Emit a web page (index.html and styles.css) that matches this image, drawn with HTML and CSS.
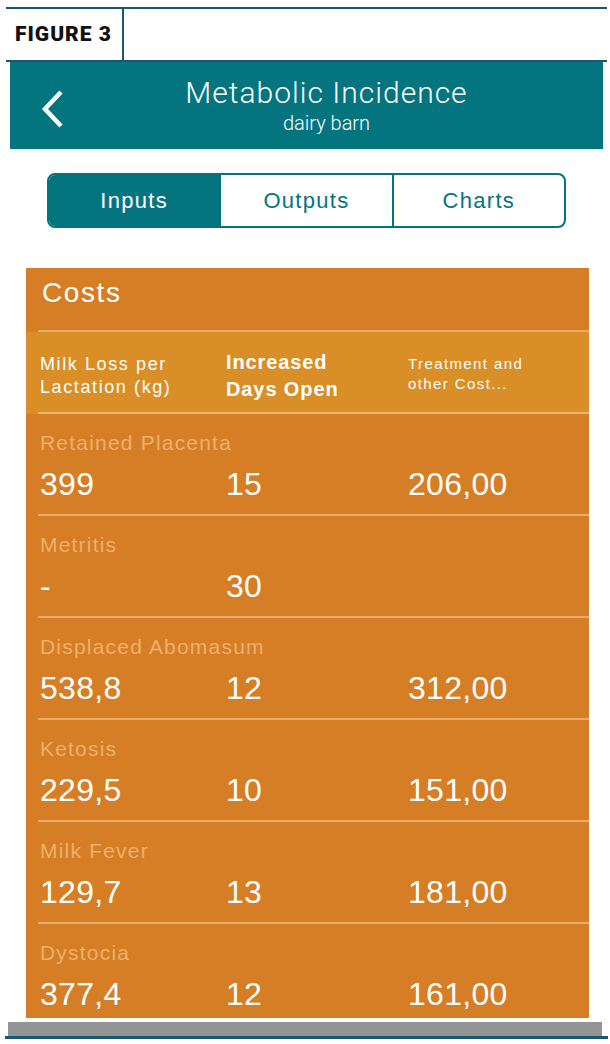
FILE: index.html
```html
<!DOCTYPE html>
<html>
<head>
<meta charset="utf-8">
<title>Metabolic Incidence</title>
<link rel="stylesheet" href="styles.css">
</head>
<body>
<div class="figure-head">
    <div class="figure-label">FIGURE 3</div>
    <div class="figure-rest"></div>
</div>

<div class="screen">
    <div class="nav-bar">
        <a class="back-btn" href="#">
            <svg width="24" height="40" viewBox="0 0 24 40">
                <polyline points="20,3 4,20 20,37" fill="none" stroke="#ffffff" stroke-width="4.5"/>
            </svg>
        </a>
        <div class="nav-title">
            <div class="title">Metabolic Incidence</div>
            <div class="subtitle">dairy barn</div>
        </div>
    </div>

    <div class="tabs">
        <div class="tab active">Inputs</div>
        <div class="tab">Outputs</div>
        <div class="tab">Charts</div>
    </div>

    <div class="panel">
        <div class="panel-title">Costs</div>

        <div class="col-head">
            <div class="col-head-inner">
                <div class="head-1">Milk Loss per<br>Lactation (kg)</div>
                <div class="head-2">Increased<br>Days Open</div>
                <div class="head-3">Treatment and<br>other Cost...</div>
            </div>
        </div>

        <div class="row">
            <div class="row-label">Retained Placenta</div>
            <div class="row-values"><span>399</span><span>15</span><span>206,00</span></div>
        </div>
        <div class="row">
            <div class="row-label">Metritis</div>
            <div class="row-values"><span>-</span><span>30</span><span></span></div>
        </div>
        <div class="row">
            <div class="row-label">Displaced Abomasum</div>
            <div class="row-values"><span>538,8</span><span>12</span><span>312,00</span></div>
        </div>
        <div class="row">
            <div class="row-label">Ketosis</div>
            <div class="row-values"><span>229,5</span><span>10</span><span>151,00</span></div>
        </div>
        <div class="row">
            <div class="row-label">Milk Fever</div>
            <div class="row-values"><span>129,7</span><span>13</span><span>181,00</span></div>
        </div>
        <div class="row last">
            <div class="row-label">Dystocia</div>
            <div class="row-values"><span>377,4</span><span>12</span><span>161,00</span></div>
        </div>
    </div>
</div>

<div class="bottom-bar"></div>
<div class="bottom-line"></div>
</body>
</html>
```

FILE: styles.css
```css
body {
    margin: 0;
    background-color: #ffffff;
    font-family: "Liberation Sans", Arial, sans-serif;
}

.figure-head {
    display: flex;
    height: 51px;
    margin: 7px 3px 0 6px;
    border-top: 2px solid #1d5670;
    border-bottom: 2px solid #1d5670;
}

.figure-label {
    width: 118px;
    border-right: 2px solid #1d5670;
    font-family: Roboto, "Liberation Sans", sans-serif;
    font-weight: 900;
    font-size: 21px;
    letter-spacing: 1px;
    white-space: nowrap;
    color: #111111;
    padding-left: 9px;
    line-height: 51px;
    box-sizing: border-box;
}

.screen {
    margin: 0 7px 0 10px;
}

.nav-bar {
    position: relative;
    height: 87px;
    background-color: #04757f;
    display: flex;
    align-items: center;
    justify-content: center;
}

.back-btn {
    position: absolute;
    left: 31px;
    top: 27px;
    display: block;
}

.nav-title {
    text-align: center;
    color: #ffffff;
    padding-left: 40px;
    margin-top: 2px;
}

.title {
    font-family: Roboto, "Liberation Sans", sans-serif;
    font-weight: 300;
    font-size: 30px;
    letter-spacing: 1px;
    line-height: 32px;
}

.subtitle {
    font-family: Roboto, "Liberation Sans", sans-serif;
    font-weight: 300;
    font-size: 20px;
    line-height: 28px;
}

.tabs {
    display: flex;
    height: 55px;
    margin: 24px 37px 40px 37px;
    border: 2px solid #04757f;
    border-radius: 8px;
    overflow: hidden;
    box-sizing: border-box;
}

.tab {
    flex: 1;
    display: flex;
    align-items: center;
    justify-content: center;
    font-size: 22px;
    letter-spacing: 1.3px;
    color: #04757f;
    border-left: 2px solid #04757f;
}

.tab:first-child {
    border-left: none;
}

.tab.active {
    background-color: #04757f;
    color: #ffffff;
}

.panel {
    margin: 0 14px 0 16px;
    background-color: #d67e26;
    height: 750px;
    overflow: hidden;
    color: #ffffff;
}

.panel-title {
    height: 64px;
    margin-left: 12px;
    padding-left: 4px;
    font-size: 28px;
    letter-spacing: 1.6px;
    line-height: 50px;
    box-sizing: border-box;
    border-bottom: 2px solid #ebae6a;
}

.col-head {
    background-color: #d98e28;
    height: 82px;
}

.col-head-inner {
    margin-left: 12px;
    height: 82px;
    border-bottom: 2px solid #ecb56c;
    box-sizing: border-box;
    display: grid;
    grid-template-columns: 186px 182px 1fr;
    align-items: center;
    padding-left: 2px;
}

.head-1 {
    font-size: 18px;
    letter-spacing: 1.6px;
    line-height: 23px;
    margin-top: 8px;
}

.head-2 {
    font-size: 20px;
    font-weight: bold;
    letter-spacing: 0.9px;
    line-height: 27px;
    margin-top: 8px;
}

.head-3 {
    font-size: 15px;
    letter-spacing: 1.4px;
    line-height: 20px;
    margin-top: 4px;
}

.row {
    margin-left: 12px;
    height: 102px;
    border-bottom: 2px solid #eaac68;
    box-sizing: border-box;
    padding: 14px 0 0 2px;
}

.row.last {
    border-bottom: none;
}

.row-label {
    font-size: 21px;
    letter-spacing: 1.2px;
    color: #eeb06c;
    line-height: 30px;
}

.row-values {
    display: grid;
    grid-template-columns: 186px 182px 1fr;
    font-size: 32px;
    letter-spacing: 0.3px;
    line-height: 46px;
    margin-top: 3px;
}

.bottom-bar {
    height: 14px;
    margin: 4px 8px 0 8px;
    background-color: #929496;
}

.bottom-line {
    height: 3px;
    margin: 0 2px 0 5px;
    background-color: #1d5670;
}
```
